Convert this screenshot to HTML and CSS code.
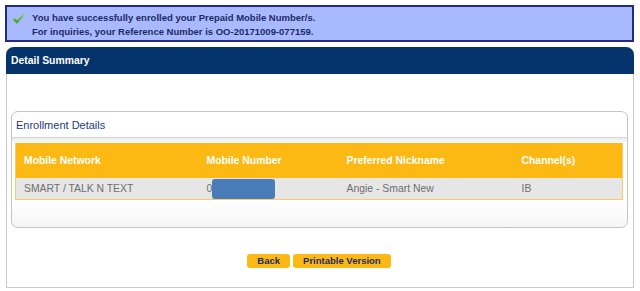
FILE: index.html
```html
<!DOCTYPE html>
<html lang="en">
<head>
    <meta charset="UTF-8">
    <title>Enrollment Summary</title>
    <link rel="stylesheet" href="styles.css">
</head>
<body>
    <div class="notice">
        <svg class="notice-icon" width="13" height="12" viewBox="0 0 14 12">
            <defs>
                <linearGradient id="chk" x1="0" y1="0" x2="0" y2="1">
                    <stop offset="0" stop-color="#8fd86a"/>
                    <stop offset="1" stop-color="#2f9a2a"/>
                </linearGradient>
            </defs>
            <path d="M0.5 6.5 L3 4.8 L5.3 7.4 L12 0.5 L13.5 2 L5.4 11.2 Z" fill="url(#chk)"/>
        </svg>
        <div class="notice-text">
            <p>You have successfully enrolled your Prepaid Mobile Number/s.</p>
            <p>For inquiries, your Reference Number is OO-20171009-077159.</p>
        </div>
    </div>

    <div class="panel">
        <div class="panel-header">Detail Summary</div>
        <div class="panel-body">
            <div class="details-box">
                <div class="details-title">Enrollment Details</div>
                <div class="details-content">
                    <table class="details-table">
                        <thead>
                            <tr>
                                <th class="col-network">Mobile Network</th>
                                <th class="col-number">Mobile Number</th>
                                <th class="col-nick">Preferred Nickname</th>
                                <th class="col-channel">Channel(s)</th>
                            </tr>
                        </thead>
                        <tbody>
                            <tr>
                                <td>SMART / TALK N TEXT</td>
                                <td>0<span class="masked"></span></td>
                                <td>Angie - Smart New</td>
                                <td>IB</td>
                            </tr>
                        </tbody>
                    </table>
                </div>
            </div>
            <div class="actions">
                <button class="btn">Back</button>
                <button class="btn">Printable Version</button>
            </div>
        </div>
    </div>
</body>
</html>
```

FILE: styles.css
```css
:root {
    --navy: #05336b;
    --notice-bg: #a9b9fd;
    --notice-border: #1f2c80;
    --notice-text: #1b2a66;
    --orange: #fdb913;
    --row-bg: #e6e6e6;
    --row-text: #6e6e6e;
    --panel-border: #c9c9c9;
}

* {
    margin: 0;
    padding: 0;
    box-sizing: border-box;
}

body {
    font-family: "Liberation Sans", Arial, sans-serif;
    background-color: #fff;
    width: 640px;
    height: 291px;
    overflow: hidden;
}

/* success message */
.notice {
    display: flex;
    align-items: flex-start;
    margin: 5px 6px 0 5px;
    height: 37px;
    background-color: var(--notice-bg);
    border: 2px solid var(--notice-border);
    padding: 4px 0 0 5px;
}

.notice-icon {
    margin: 2px 7px 0 0;
    flex-shrink: 0;
}

.notice-text {
    color: var(--notice-text);
    font-weight: bold;
    font-size: 9.5px;
    line-height: 14px;
}

/* detail panel */
.panel {
    margin: 5px 6px 0 6px;
    height: 241px;
    border: 1px solid var(--panel-border);
    border-top: none;
    border-radius: 8px 8px 0 0;
}

.panel-header {
    height: 27px;
    background-color: var(--navy);
    color: #fff;
    font-weight: bold;
    font-size: 10.4px;
    line-height: 28px;
    padding-left: 5px;
    border-radius: 8px 8px 0 0;
    margin: 0 -1px;
}

.panel-body {
    padding: 37px 5px 0 4px;
}

.details-box {
    height: 117px;
    border: 1px solid #c4c4c4;
    border-radius: 7px;
    background: linear-gradient(#fff 75%, #f6f6f6 100%);
    overflow: hidden;
}

.details-title {
    height: 26px;
    line-height: 27px;
    padding-left: 4px;
    font-size: 11px;
    color: #1d3c7c;
    border-bottom: 1px solid #d6d6d6;
}

.details-content {
    padding: 5px 4px 0 3px;
    background: linear-gradient(#ececec 0, #fafafa 5px, #fff 6px);
}

.details-table {
    width: 100%;
    border-collapse: collapse;
    border: 1px solid #f9c96a;
    border-top: none;
    font-size: 10.4px;
}

.details-table th {
    background-color: var(--orange);
    color: #fff;
    text-align: left;
    font-weight: bold;
    height: 35px;
    padding: 0 0 0 8px;
}

.details-table td {
    background-color: var(--row-bg);
    color: var(--row-text);
    height: 21px;
    line-height: 21px;
    padding: 0 0 0 8px;
}

.col-network { width: 183px; }
.col-number { width: 140px; }
.col-nick { width: 175px; }

.masked {
    display: inline-block;
    width: 63px;
    height: 20px;
    vertical-align: top;
    margin-top: 1px;
    background-color: #4a7cba;
    border-radius: 3px;
}

/* buttons */
.actions {
    display: flex;
    justify-content: center;
    gap: 3px;
    padding-top: 26px;
    padding-right: 1px;
}

.btn {
    height: 14px;
    background-color: var(--orange);
    color: var(--notice-text);
    border: none;
    border-radius: 3px;
    font-family: "Liberation Sans", Arial, sans-serif;
    font-weight: bold;
    font-size: 9.5px;
    line-height: 14px;
    padding: 0 10px;
    cursor: pointer;
}
```
